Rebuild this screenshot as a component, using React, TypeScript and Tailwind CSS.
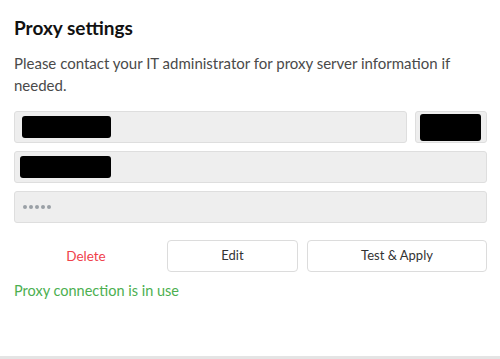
const inputBox = "h-[32px] rounded-[3px] border border-[#dedede] bg-[#eeeeee] flex items-center";
const redact = "bg-black rounded-[3px]";

export default function App() {
    return (
        <div className="w-[500px] h-[359px] bg-white flex flex-col font-['Lato',sans-serif]">
            <div className="flex-1 pl-[14px] pr-[13px] pt-[16px]">
                <h1 className="text-[19px] leading-[24px] font-bold text-[#111]">Proxy settings</h1>
                <p className="mt-[12px] text-[15px] leading-[22px] text-[#4a4a4a] pr-[10px]">
                    Please contact your IT administrator for proxy server information if needed.
                </p>

                {/* Host + port */}
                <div className="mt-[15px] flex gap-[8px]">
                    <div className={`${inputBox} flex-1 pl-[7px]`}>
                        <div className={`${redact} w-[89px] h-[22px]`} />
                    </div>
                    <div className={`${inputBox} w-[72px] pl-[4px]`}>
                        <div className={`${redact} w-[61px] h-[27px]`} />
                    </div>
                </div>

                {/* Username */}
                <div className={`${inputBox} mt-[8px] pl-[5px]`}>
                    <div className={`${redact} w-[91px] h-[22px]`} />
                </div>

                {/* Password */}
                <div className={`${inputBox} mt-[8px] pl-[8px]`}>
                    <div className="flex gap-[2px]">
                        {[0, 1, 2, 3, 4].map((i) => (
                            <span key={i} className="w-[4px] h-[4px] rounded-full bg-[#9aa0a6]" />
                        ))}
                    </div>
                </div>

                {/* Actions */}
                <div className="mt-[17px] flex gap-[9px] h-[32px]">
                    <button className="w-[144px] text-[13.5px] text-[#f0414b]">Delete</button>
                    <button className="w-[131px] rounded-[4px] border border-[#dcdcdc] bg-white text-[13px] text-[#333]">Edit</button>
                    <button className="flex-1 rounded-[4px] border border-[#dcdcdc] bg-white text-[13px] text-[#333]">Test &amp; Apply</button>
                </div>

                <p className="mt-[8px] text-[14.5px] leading-[22px] text-[#4caf50]">Proxy connection is in use</p>
            </div>
            <div className="h-[3px] bg-[#e4e4e4]" />
        </div>
    );
}
